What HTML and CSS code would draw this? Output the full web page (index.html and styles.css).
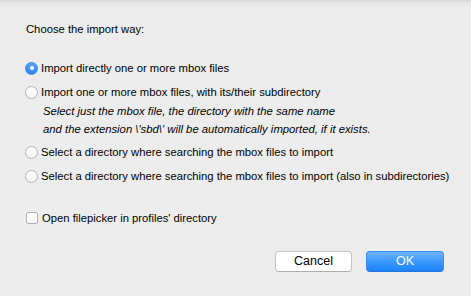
FILE: index.html
```html
<!DOCTYPE html>
<html lang="en">
<head>
    <meta charset="UTF-8">
    <title>Import mbox files</title>
    <link rel="stylesheet" href="styles.css">
</head>
<body>
    <div class="dialog">
        <p class="prompt">Choose the import way:</p>

        <div class="choices">
            <label class="choice">
                <input type="radio" name="importWay" value="0" checked>
                <span class="radio"></span>
                <span>Import directly one or more mbox files</span>
            </label>
            <label class="choice">
                <input type="radio" name="importWay" value="1">
                <span class="radio"></span>
                <span>Import one or more mbox files, with its/their subdirectory</span>
            </label>
            <div class="note">
                <div>Select just the mbox file, the directory with the same name</div>
                <div>and the extension \'sbd\' will be automatically imported, if it exists.</div>
            </div>
            <label class="choice">
                <input type="radio" name="importWay" value="2">
                <span class="radio"></span>
                <span>Select a directory where searching the mbox files to import</span>
            </label>
            <label class="choice">
                <input type="radio" name="importWay" value="3">
                <span class="radio"></span>
                <span>Select a directory where searching the mbox files to import (also in subdirectories)</span>
            </label>
        </div>

        <label class="choice check-row">
            <input type="checkbox" name="profileDir">
            <span class="checkbox"></span>
            <span>Open filepicker in profiles' directory</span>
        </label>

        <div class="buttons">
            <button type="button" class="btn">Cancel</button>
            <button type="button" class="btn btn-default">OK</button>
        </div>
    </div>
</body>
</html>
```

FILE: styles.css
```css
* {
    margin: 0;
    padding: 0;
    box-sizing: border-box;
}

body {
    background: linear-gradient(to bottom, #d6d6d6 0px, #e6e6e6 3px, #ececec 7px, #ececec 100%);
    width: 471px;
    height: 296px;
    overflow: hidden;
    font-family: "Liberation Sans", Arial, sans-serif;
    font-size: 11.25px;
    color: #000;
}

.dialog {
    display: flex;
    flex-direction: column;
    padding: 21px 27px 0 26px;
}

.prompt {
    line-height: 16px;
    height: 16px;
}

.choices {
    display: flex;
    flex-direction: column;
    margin-top: 19px;
    margin-left: -1px;
}

.choice {
    display: flex;
    align-items: center;
    height: 24px;
    line-height: 16px;
    white-space: nowrap;
}

.choice input {
    display: none;
}

.radio {
    width: 13px;
    height: 13px;
    border-radius: 50%;
    border: 1px solid #b2b2b2;
    background: linear-gradient(to bottom, #ffffff, #f4f4f4);
    margin-right: 3px;
    flex-shrink: 0;
    position: relative;
}

.choice input:checked + .radio {
    border-color: #3b87e8;
    background: linear-gradient(to bottom, #5aa6f8, #2a83f3);
}

.choice input:checked + .radio::after {
    content: "";
    position: absolute;
    left: 3.5px;
    top: 3.5px;
    width: 4px;
    height: 4px;
    border-radius: 50%;
    background: #fff;
}

.note {
    display: flex;
    flex-direction: column;
    padding-left: 18px;
    font-style: italic;
    font-size: 11.3px;
    line-height: 18px;
    margin-top: -2px;
    margin-bottom: 2px;
}

.check-row {
    margin-top: 18px;
}

.checkbox {
    width: 12px;
    height: 12px;
    border: 1px solid #b2b2b2;
    border-radius: 2px;
    background: linear-gradient(to bottom, #ffffff, #f6f6f6);
    margin-right: 4px;
    flex-shrink: 0;
}

.buttons {
    display: flex;
    justify-content: flex-end;
    gap: 14px;
    margin-top: 21px;
}

.btn {
    width: 77px;
    height: 21px;
    border: 1px solid #c4c4c4;
    border-bottom-color: #b0b0b0;
    border-radius: 4px;
    background: #fff;
    font-family: "Liberation Sans", Arial, sans-serif;
    font-size: 12.5px;
    color: #000;
    line-height: 19px;
    cursor: pointer;
}

.btn-default {
    width: 78px;
    border-color: #3d8cf2;
    border-bottom-color: #2a73dc;
    background: linear-gradient(to bottom, #6db4fb, #3c98fb 50%, #1b83fb 100%);
    color: #fff;
}
```
